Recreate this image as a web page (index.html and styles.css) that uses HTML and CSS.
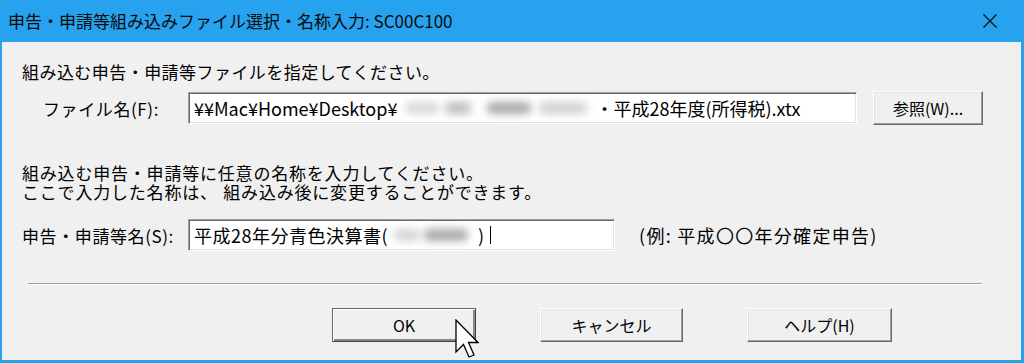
FILE: index.html
```html
<!DOCTYPE html>
<html lang="ja">
<head>
<meta charset="utf-8">
<title>申告・申請等組み込みファイル選択・名称入力</title>
<link rel="stylesheet" href="styles.css">
</head>
<body>
<div class="window">
  <div class="titlebar">
    <span class="title">申告・申請等組み込みファイル選択・名称入力: SC00C100</span>
    <span class="close">
      <svg width="14" height="14" viewBox="0 0 14 14"><path d="M0.5 0.5 L13.5 13.5 M13.5 0.5 L0.5 13.5" stroke="#111" stroke-width="1.3" fill="none"/></svg>
    </span>
  </div>
  <div class="client">
    <div class="prompt">組み込む申告・申請等ファイルを指定してください。</div>
    <div class="row file-row">
      <label class="label label-indent">ファイル名(F):</label>
      <div class="field field-file"><span class="val">¥¥Mac¥Home¥Desktop¥</span><span class="blur blur-file"><i class="b1"></i><i class="b2"></i><i class="b3"></i><i class="b4"></i></span><span class="val">・平成28年度(所得税).xtx</span></div>
      <button class="btn btn-browse">参照(W)...</button>
    </div>
    <div class="prompt prompt2">
      <div class="line">組み込む申告・申請等に任意の名称を入力してください。</div>
      <div class="line">ここで入力した名称は、 組み込み後に変更することができます。</div>
    </div>
    <div class="row name-row">
      <label class="label">申告・申請等名(S):</label>
      <div class="field field-name"><span class="val">平成28年分青色決算書(</span><span class="blur blur-name"><i class="b1"></i><i class="b2"></i></span><span class="val">)</span><span class="caret"></span></div>
      <span class="example">(例: 平成〇〇年分確定申告)</span>
    </div>
    <div class="separator"></div>
    <div class="buttons">
      <button class="btn btn-default">OK</button>
      <button class="btn btn-cancel">キャンセル</button>
      <button class="btn btn-help">ヘルプ(H)</button>
    </div>
  </div>
  <svg class="cursor" width="24" height="40" viewBox="0 0 24 40"><path d="M1 1 L1 33 L8.5 25.5 L14 38 L19 36 L13.5 23.5 L23 23.5 Z" fill="#fff" stroke="#000" stroke-width="1.3" stroke-linejoin="miter"/></svg>
</div>
</body>
</html>
```
FILE: styles.css
```css
* { box-sizing: border-box; }
html, body { margin: 0; padding: 0; }
body {
  width: 1024px;
  height: 363px;
  overflow: hidden;
  font-family: "Noto Sans CJK JP", "Noto Sans", sans-serif;
  color: #000;
}
.window {
  position: relative;
  width: 1024px;
  height: 363px;
  background: #27a2ee;
  display: flex;
  flex-direction: column;
}
.titlebar {
  height: 42px;
  display: flex;
  align-items: center;
  justify-content: space-between;
  padding: 0 27px 0 8px;
}
.title {
  font-size: 17px;
  line-height: 20px;
  color: #0a0a0a;
}
.close {
  display: flex;
  width: 14px;
  height: 14px;
}
.client {
  flex: 1;
  margin: 0 3px 3px 2px;
  background: #f0f0f0;
  padding: 20px 20px 0 20px;
  font-size: 17px;
}
.prompt {
  font-size: 17px;
  line-height: 20px;
  letter-spacing: 0.45px;
  white-space: nowrap;
}
.prompt2 {
  margin-top: 40px;
  font-family: "Liberation Sans", "Noto Sans CJK JP", sans-serif;
  line-height: 19px;
  letter-spacing: 0.8px;
}
.prompt2 .line { height: 19px; }
.row {
  display: flex;
  align-items: center;
}
.file-row {
  margin-top: 9px;
  height: 34px;
}
.name-row {
  margin-top: 16px;
  height: 32px;
}
.label {
  width: 166px;
  flex: none;
  font-size: 17px;
  letter-spacing: 0.6px;
  white-space: nowrap;
}
.label-indent { padding-left: 21px; }
.field {
  height: 32px;
  background: #fff;
  border: 1px solid;
  border-color: #a0a0a0 #fff #fff #a0a0a0;
  box-shadow: inset 1px 1px 0 #696969, inset -1px -1px 0 #e3e3e3;
  display: flex;
  align-items: center;
  padding-left: 5px;
  font-size: 18px;
  white-space: nowrap;
  overflow: hidden;
}
.field-file { width: 669px; }
.field-name { width: 427px; letter-spacing: 0.5px; }
.blur {
  position: relative;
  display: inline-block;
  height: 28px;
  flex: none;
  overflow: hidden;
}
.blur i {
  position: absolute;
  top: 8px;
  height: 12px;
  filter: blur(4px);
  border-radius: 5px;
}
.blur-file { width: 198px; }
.blur-file .b1 { left: 8px; width: 34px; background: #d8d8d8; }
.blur-file .b2 { left: 48px; width: 26px; background: #bcbcbc; }
.blur-file .b3 { left: 90px; width: 44px; background: #a8a8a8; }
.blur-file .b4 { left: 142px; width: 48px; background: #d0d0d0; }
.blur-name { width: 90px; }
.blur-name .b1 { left: 6px; width: 26px; background: #d4d4d4; }
.blur-name .b2 { left: 36px; width: 44px; background: #a8a8a8; }
.caret {
  display: inline-block;
  width: 1px;
  height: 18px;
  margin-left: 5px;
  background: #000;
}
.example {
  margin-left: 24px;
  font-size: 18px;
  letter-spacing: 1.3px;
}
.btn {
  height: 34px;
  background: #f0f0f0;
  border: 1px solid;
  border-color: #fff #696969 #696969 #fff;
  box-shadow: inset -1px -1px 0 #a0a0a0, inset 1px 1px 0 #e3e3e3;
  font-family: "Noto Sans CJK JP", "Noto Sans", sans-serif;
  font-size: 16px;
  color: #000;
  padding: 0;
  display: flex;
  align-items: center;
  justify-content: center;
}
.btn-browse {
  width: 110px;
  margin-left: 16px;
}
.separator {
  margin: 32px 19px 0 6px;
  border-top: 1px solid #a0a0a0;
  border-bottom: 1px solid #fff;
}
.buttons {
  margin-top: 23px;
  display: flex;
  gap: 64px;
  padding-left: 310px;
}
.btn-default {
  width: 144px;
  border-color: #696969 #404040 #404040 #696969;
  box-shadow: inset 1px 1px 0 #fff, inset -2px -2px 0 #888;
}
.btn-cancel { width: 143px; }
.btn-help { width: 145px; }
.cursor {
  position: absolute;
  left: 455px;
  top: 319px;
}
```
